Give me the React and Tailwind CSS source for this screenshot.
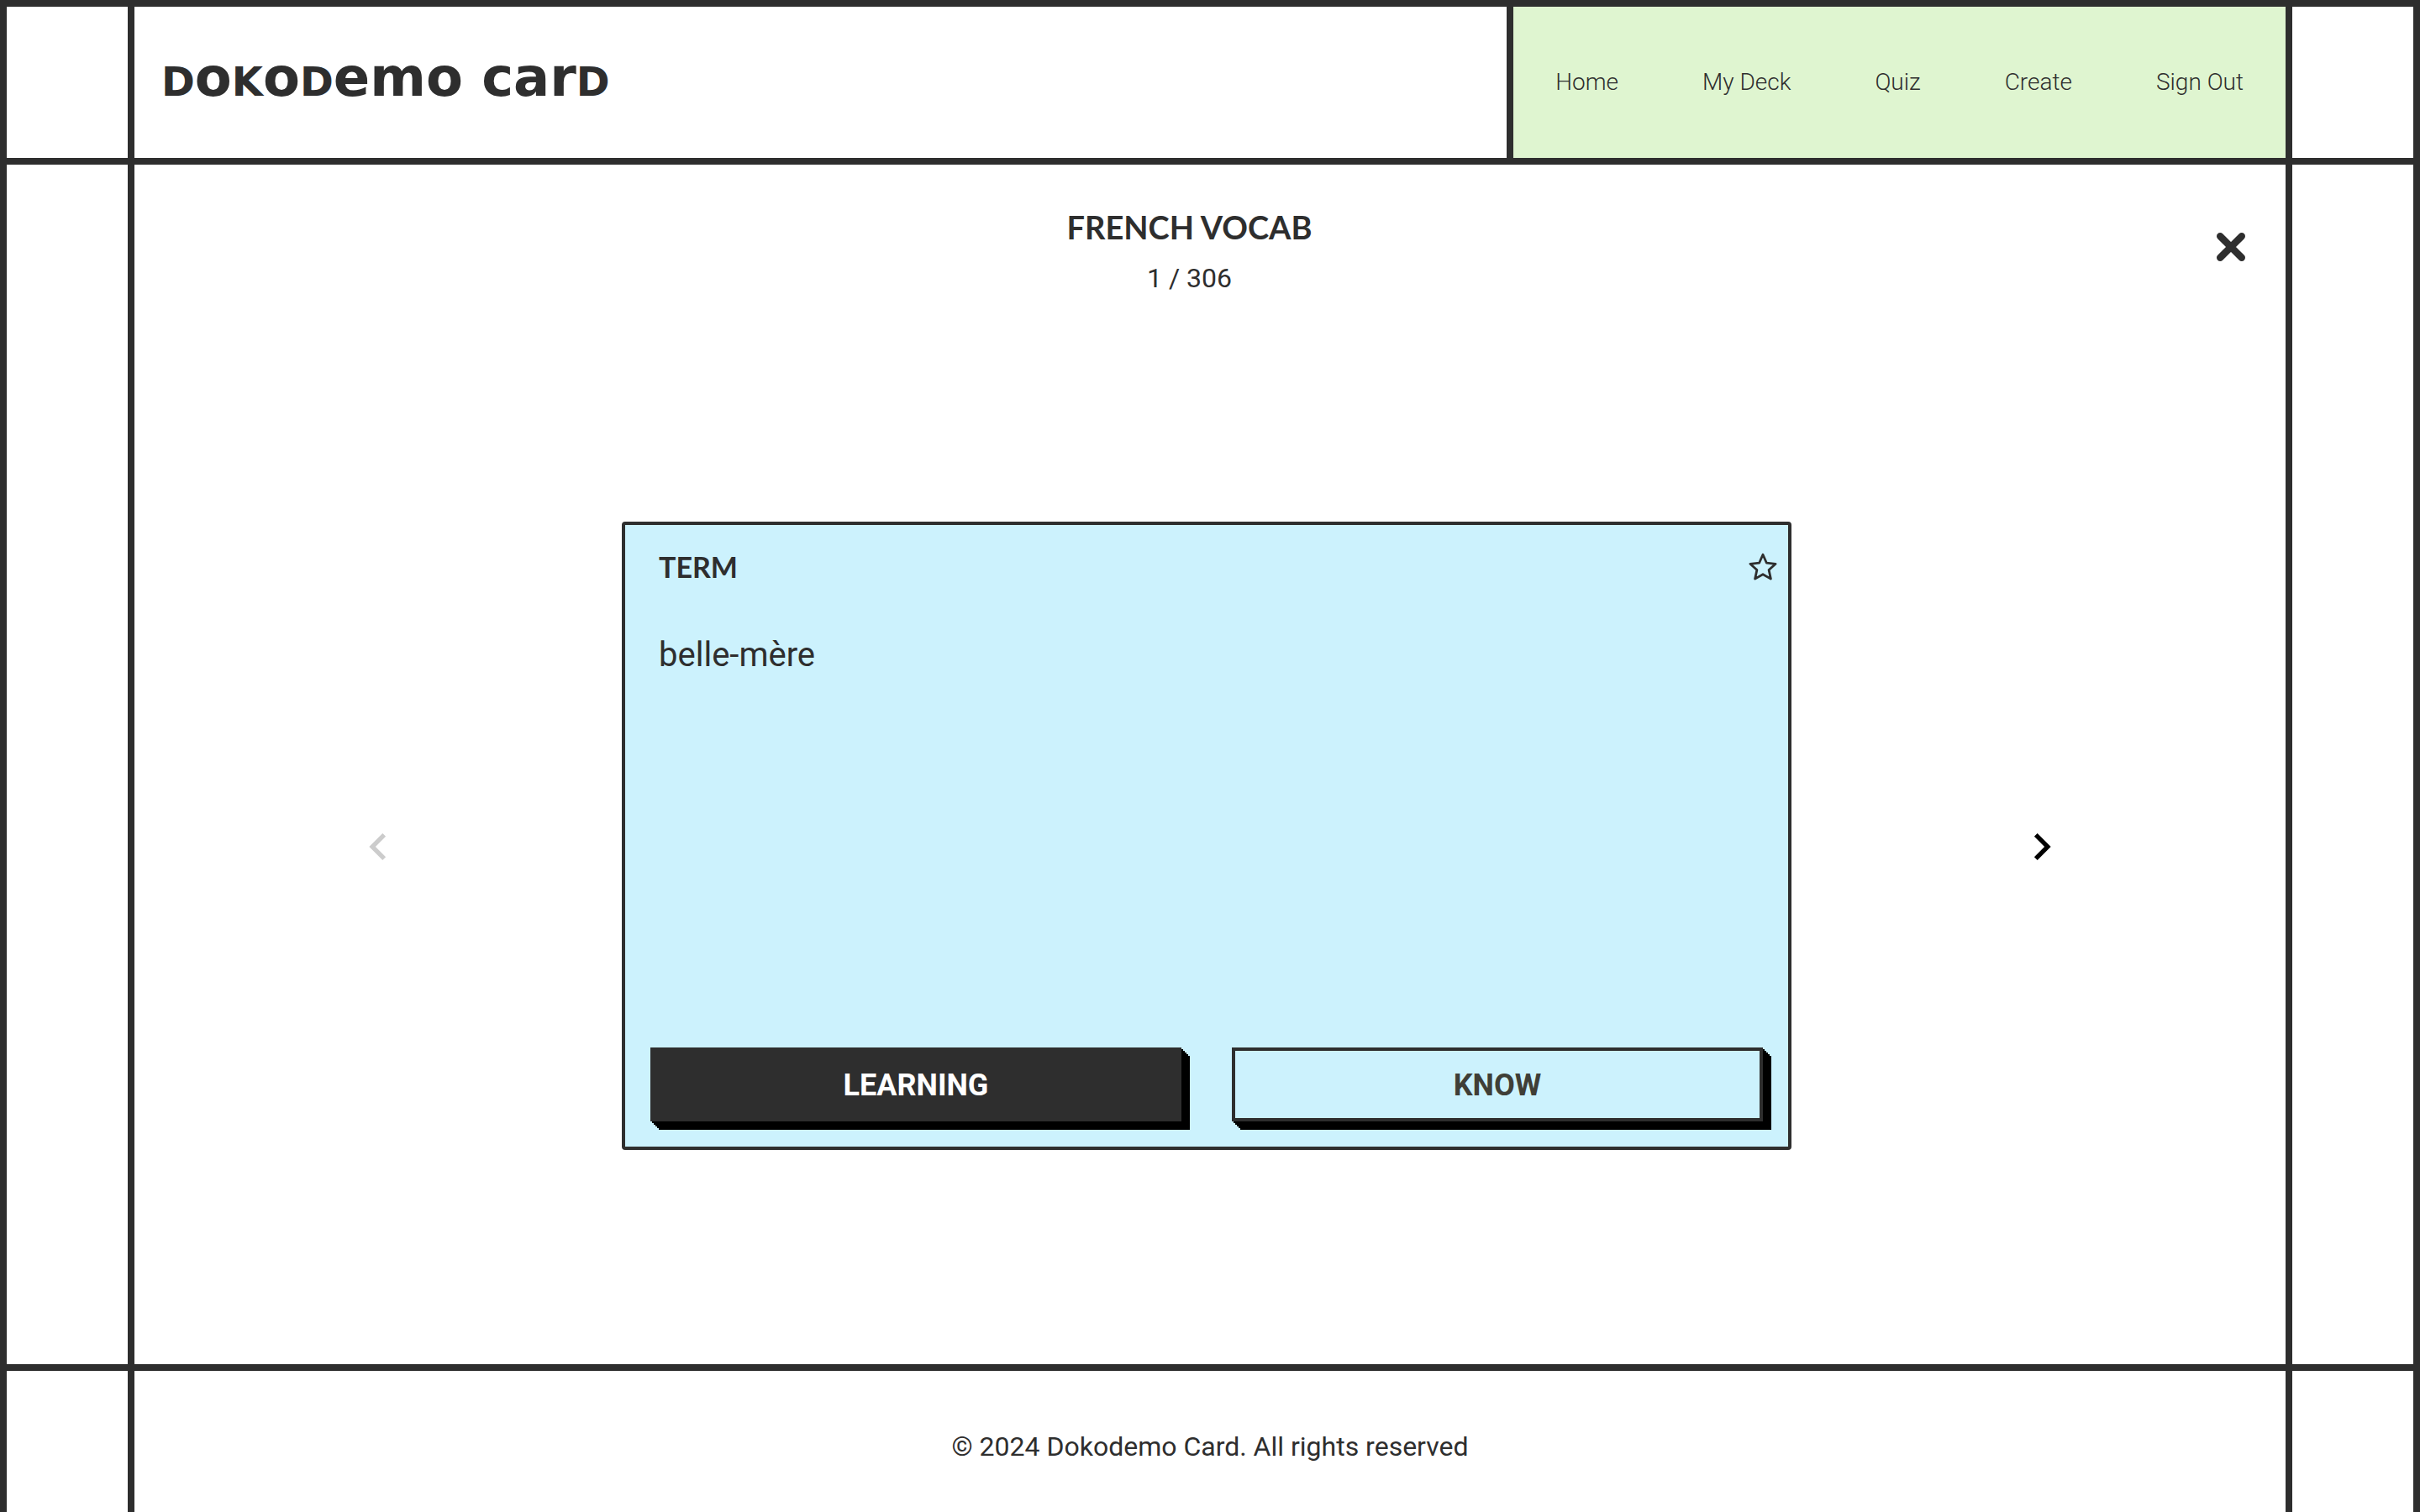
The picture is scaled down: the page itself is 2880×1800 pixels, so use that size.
import { MdNavigateBefore, MdNavigateNext } from "react-icons/md";

const links = ["Home", "My Deck", "Quiz", "Create", "Sign Out"];

const actionClass =
  "h-[88px] flex-1 border-4 border-[#2e2e2e] pt-0.5 text-4xl font-bold shadow-[2px_2px_#000,4px_4px_#000,6px_6px_#000,8px_8px_#000,10px_10px_#000]";

function SmallCap({ children }) {
  return <span className="text-5xl leading-none uppercase">{children}</span>;
}

function Logo() {
  return (
    <a href="#" aria-label="Dokodemo Card" className="pl-8 pb-3 font-['DejaVu_Sans',sans-serif] text-[64px] leading-none font-bold whitespace-nowrap">
      <SmallCap>D</SmallCap>o<SmallCap>k</SmallCap>o<SmallCap>d</SmallCap>emo <span className="lowercase">C</span>ar<SmallCap>d</SmallCap>
    </a>
  );
}

function CloseIcon() {
  return (
    <svg viewBox="0 0 40 40" className="size-10" fill="none" stroke="currentColor" strokeWidth="8.4" strokeLinecap="round">
      <path d="M7.2 7.2l25.6 25.6M32.8 7.2L7.2 32.8" />
    </svg>
  );
}

function StarIcon() {
  return (
    <svg viewBox="0 0 40 40" className="size-10" fill="none" stroke="currentColor" strokeWidth="2.8" strokeLinejoin="round">
      <path d="M20 5.2l4.4 10 10.7 1.1-8 7.2 2.3 10.6L20 28.7l-9.4 5.4 2.3-10.6-8-7.2 10.7-1.1z" />
    </svg>
  );
}

export default function App() {
  return (
    <div className="grid min-h-screen grid-cols-[144px_minmax(0,1fr)_144px] grid-rows-[180px_1fr_168px] gap-2 bg-[#2e2e2e] px-2 pt-2 font-['Roboto',sans-serif] text-[#2e2e2e]">
      <div className="bg-white" />
      <header className="flex gap-2">
        <div className="flex flex-1 items-center bg-white">
          <Logo />
        </div>
        <nav className="flex items-center gap-[100px] bg-[#dff5d0] px-[50px] text-[28px] font-light">
          {links.map((label) => (
            <a key={label} href="#" className="whitespace-nowrap">
              {label}
            </a>
          ))}
        </nav>
      </header>
      <div className="bg-white" />

      <div className="bg-white" />
      <main className="flex flex-col bg-white">
        <div className="flex items-start pt-12 pr-[45px]">
          <div className="flex-1 pl-9 text-center">
            <h1 className="font-['Lato',sans-serif] text-[38px] leading-[52px] font-bold">FRENCH VOCAB</h1>
            <p className="mt-2 text-[32px] leading-[54px]">1 / 306</p>
          </div>
          <button type="button" aria-label="Close" className="mt-[30px]">
            <CloseIcon />
          </button>
        </div>

        <div className="mt-[263px] flex items-center justify-between px-[258px]">
          <button type="button" aria-label="Previous card" disabled className="mt-[26px] text-[#cccccc]">
            <MdNavigateBefore className="size-16" />
          </button>
          <article className="mr-2 flex h-[748px] w-[1392px] flex-col rounded border-4 border-[#2e2e2e] bg-[#ccf2fd] p-[30px]">
            <div className="-mr-5 flex items-center justify-between pl-2.5">
              <h2 className="font-['Lato',sans-serif] text-[34px] leading-10 font-bold">TERM</h2>
              <button type="button" aria-label="Star this card">
                <StarIcon />
              </button>
            </div>
            <p className="mt-[61px] pl-2.5 text-[40px] leading-[48px]">belle-mère</p>
            <div className="mt-auto flex gap-[60px]">
              <button type="button" className={`${actionClass} bg-[#2e2e2e] text-white`}>
                LEARNING
              </button>
              <button type="button" className={`${actionClass} text-[#3f3e36]`}>
                KNOW
              </button>
            </div>
          </article>
          <button type="button" aria-label="Next card" className="mt-[26px] text-black">
            <MdNavigateNext className="size-16" />
          </button>
        </div>
      </main>
      <div className="bg-white" />

      <div className="bg-white" />
      <footer className="flex items-center justify-center bg-white pt-3 text-[32px]">
        © 2024 Dokodemo Card. All rights reserved
      </footer>
      <div className="bg-white" />
    </div>
  );
}
